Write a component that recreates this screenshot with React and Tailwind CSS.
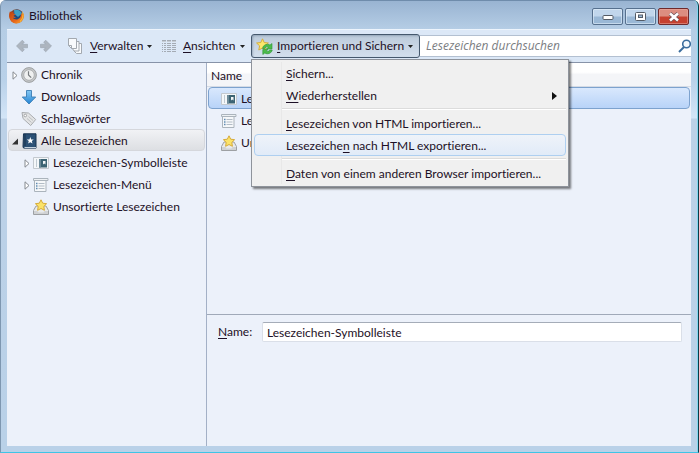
import React from "react";

function Firefox() {
  return (
    <svg width="15" height="15" viewBox="0 0 15 15" aria-hidden="true">
      <defs>
        <linearGradient id="fox" x1="0" y1="0" x2="1" y2="1">
          <stop offset="0" stopColor="#b9400f" />
          <stop offset="0.6" stopColor="#e8681a" />
          <stop offset="1" stopColor="#f9b233" />
        </linearGradient>
      </defs>
      <circle cx="7.500" cy="7.200" r="7" fill="#a3481c" />
      <circle cx="8" cy="6" r="5.600" fill="#1f4a80" />
      <path d="M5 1.200C8 0 12 1.500 13 4.500L9 8 5.500 5z" fill="#3f9fc4" />
      <path d="M1 2.200C.2 4-.1 6 .2 8c.6 3.800 3.700 6.500 7.400 6.500 4 0 7.200-3.200 7.200-7.200 0-2-.7-3.700-1.700-4.800.4 1.500.5 2.500.3 3.500-.8-1-.9-1.700-1.600-2.300.9 3.700-1.300 6.900-4.500 6.900-1.700 0-3-.8-3.600-2 1.200.5 2.300.3 3.200-.4-.9-.1-2-.5-2.400-1.500l2-1.200c.1-.5-1.600-1-2-1.100 0-.7.300-1.300.8-1.800-1-.1-1.900.3-2.500.9C2.100 3.200 1.300 2.900 1 2.200z" fill="url(#fox)" />
      <path d="M13.500 3.500c1 3 .5 6.500-2.500 9" fill="none" stroke="#fbc93e" strokeWidth="1" />
    </svg>
  );
}

function Arrow({ flip }) {
  return (
    <svg width="12" height="14" viewBox="0 0 12 14" className={flip ? "rotate-180" : ""} aria-hidden="true">
      <path d="M.5 7 6.300 1.200l2 2L6.500 5.300h5v3.500h-5l1.800 2-2 2z" fill="#adb5bf" stroke="#98a2ae" strokeWidth=".6" />
    </svg>
  );
}

function Pages() {
  return (
    <svg width="15" height="16" viewBox="0 0 15 16" fill="#f8fafc" stroke="#a3a9b0" aria-hidden="true">
      <path d="M5.500 5.500h8v10h-5l-3-3z" />
      <path d="M3.500 3.500h7.500v9.500H6.500l-3-3z" />
      <path d="M.5.500h8v10h-5l-3-3z" />
      <path d="M.5 7.500h3v3" fill="none" />
    </svg>
  );
}

function Views() {
  return (
    <svg width="14" height="13" viewBox="0 0 14 13" aria-hidden="true">
      <path d="M0 1.500h4M5 1.500h4M10 1.500h4" stroke="#c6ccd3" />
      <path d="M0 .5h4M5 .5h4M10 .5h4M0 3.500h1M2 3.500h2M5 3.500h4M10 3.500h4M0 5.500h1M2 5.500h2M5 5.500h4M10 5.500h4M0 7.500h1M2 7.500h2M5 7.500h4M10 7.500h4M0 9.500h1M2 9.500h2M5 9.500h4M10 9.500h4M0 11.500h1M2 11.500h2M5 11.500h4M10 11.500h4" stroke="#a4abb4" />
    </svg>
  );
}

function ImportStar() {
  return (
    <svg width="17" height="17" viewBox="0 0 17 17" aria-hidden="true">
      <path d="M6.500.8 8.200 4.500l4.200.5-3.100 2.800.8 4.200-3.600-2-3.700 2 .8-4.200L.6 5l4.200-.5z" fill="#fbe66b" stroke="#d8ae3c" strokeLinejoin="round" />
      <path d="M6.500 10.500A4.900 4.900 0 0 1 14 7L16 5.500V11H10.500l1.800-1.800C10.900 8.400 9.300 9 8.800 10.500z" fill="#4cbc4b" stroke="#2b9437" strokeWidth=".6" />
      <path d="M16.300 12A4.900 4.900 0 0 1 8.800 15L6.800 16.500V11.500H12l-1.700 1.700c1.400.7 2.900 0 3.500-1.200z" fill="#4cbc4b" stroke="#2b9437" strokeWidth=".6" />
    </svg>
  );
}

function Clock() {
  return (
    <svg width="16" height="16" viewBox="0 0 16 16" aria-hidden="true">
      <circle cx="8" cy="8" r="7.400" fill="#c6c8c9" stroke="#8f9293" strokeWidth=".8" />
      <circle cx="8" cy="8" r="5.300" fill="#eff0f0" stroke="#a2a5a7" strokeWidth=".8" />
      <path d="M7.500 4.200V8l2.700 2.600" fill="none" stroke="#777b7e" strokeWidth="1.200" />
    </svg>
  );
}

function Down() {
  return (
    <svg width="16" height="16" viewBox="0 0 16 16" aria-hidden="true">
      <defs>
        <linearGradient id="down" x1="0" y1="0" x2="0" y2="1">
          <stop offset="0" stopColor="#86c9f4" />
          <stop offset="1" stopColor="#2484d3" />
        </linearGradient>
      </defs>
      <path d="M5.500 1.500h5V8h4.200L8 15 1.300 8h4.200z" fill="url(#down)" stroke="#3a7db4" strokeWidth=".9" strokeLinejoin="round" />
    </svg>
  );
}

function Tag() {
  return (
    <svg width="16" height="16" viewBox="0 0 16 16" aria-hidden="true">
      <path d="M1 1.500 7.500 2l7.200 6.500-5 6L2 7.500z" fill="#e3e4e5" stroke="#a9acaf" strokeLinejoin="round" />
      <circle cx="4.300" cy="4.500" r="1.300" fill="#fff" stroke="#909396" strokeWidth=".8" />
      <path d="m7.500 5.500 4.500 4M6 7.500l4.500 4" stroke="#bcbfc1" />
    </svg>
  );
}

function Book() {
  return (
    <svg width="15" height="16" viewBox="0 0 15 16" aria-hidden="true">
      <path d="M1.500.800h12.500v14.400H2.500a1.500 1.500 0 0 1-1.500-1.500z" fill="#2c5175" stroke="#193451" />
      <path d="M2.500 14h11.500v1.300H2.500z" fill="#c5d3df" />
      <path d="M3 1v12" stroke="#17334d" />
      <path d="m8.300 4 .9 2.400 2.600.1-2 1.600.7 2.500-2.200-1.400-2.200 1.400.7-2.500-2-1.600 2.600-.1z" fill="#fff" />
    </svg>
  );
}

function ToolbarFolder() {
  return (
    <svg width="16" height="12" viewBox="0 0 16 12" aria-hidden="true">
      <path d="M.5.500h15v11H.5z" fill="#f4f7f9" stroke="#c3c9cf" />
      <path d="M3.500 2.500v7" stroke="#8c9caa" strokeDasharray="1 1" />
      <path d="M6 2h8v8.500H6z" fill="#3c6474" />
      <path d="M6 2h2v8.500H6z" fill="#6d8b99" />
      <path d="M10 4h2.500v3.500L11.200 6.500 10 7.500z" fill="#f2f6f8" />
    </svg>
  );
}

function MenuFolder() {
  return (
    <svg width="16" height="14" viewBox="0 0 16 14" aria-hidden="true">
      <path d="M1.500 2.500h11.500v11H1.500z" fill="#f6f8fa" stroke="#abb4bc" />
      <path d="M.5.500h14.500v2H.5z" fill="#edf1f4" stroke="#abb4bc" />
      <path d="M5.500 5.500h6M5.500 8h6M5.500 10.500h6" stroke="#b2bcc6" />
      <path d="M3 5.500h1.500M3 8h1.500M3 10.500h1.500" stroke="#5f8ab2" strokeWidth="1.300" />
    </svg>
  );
}

function Unsorted() {
  return (
    <svg width="16" height="16" viewBox="0 0 16 16" aria-hidden="true">
      <path d="M3 7h10l2.500 4.500v4H.5v-4z" fill="#e8eaeb" stroke="#9da0a3" strokeLinejoin="round" />
      <path d="M1 12h3.500l1 1.500h5l1-1.500H15v3H1z" fill="#d0d2d4" />
      <path d="m8 .800 1.700 3.400 3.900.5-2.800 2.700.6 3.900L8 9.500l-3.400 1.800.6-3.900-2.800-2.700 3.900-.5z" fill="#fbe369" stroke="#d6aa38" strokeLinejoin="round" />
    </svg>
  );
}

function Twisty({ open }) {
  return (
    <svg width="6" height="9" viewBox="0 0 6 9" aria-hidden="true">
      {open ? (
        <path d="M6 1.500v6H0z" fill="#333" />
      ) : (
        <path d="M1 .8v7.400l4-3.700z" fill="#fff" stroke="#858a90" />
      )}
    </svg>
  );
}

function Caret() {
  return (
    <svg width="5" height="3" viewBox="0 0 5 3" aria-hidden="true">
      <path d="M0 0h5L2.500 3z" fill="#222" />
    </svg>
  );
}

function Magnifier() {
  return (
    <svg width="13" height="14" viewBox="0 0 13 14" fill="none" aria-hidden="true">
      <path d="M6 8 1 13" stroke="#3b6d9d" strokeWidth="2" />
      <circle cx="8.500" cy="5" r="3.800" fill="#f4f9fd" stroke="#3b6d9d" strokeWidth="1.600" />
    </svg>
  );
}

function Key({ children }) {
  return <span className="underline underline-offset-2">{children}</span>;
}

function WindowButton({ label, close, children }) {
  return (
    <button
      type="button"
      aria-label={label}
      className={
        close
          ? "flex h-[17px] w-[31px] items-center justify-center rounded-xs border border-[#6f2a2c] bg-linear-to-b from-[#dc8d80] from-45% to-[#c6402f] to-55% shadow-[inset_0_0_0_1px_#e9b0a680]"
          : "flex h-[17px] w-[31px] items-center justify-center rounded-xs border border-[#56708e] bg-linear-to-b from-[#c1d6ec] from-45% to-[#9ab8d6] to-55% shadow-[inset_0_0_0_1px_#e3eefa99]"
      }
    >
      {children}
    </button>
  );
}

function SideRow({ icon, label, twisty, open, nested, selected }) {
  return (
    <li>
      <button
        type="button"
        className={
          (nested ? "pl-[15px] " : "pl-[3px] ") +
          (selected
            ? "border-[#d5d7dc] bg-linear-to-b from-[#f1f2f5] to-[#dddfe3] "
            : "border-transparent ") +
          "flex h-[22px] w-full items-center rounded-sm border pt-[2px] pr-1 text-left"
        }
      >
        <span className="flex w-[9px] shrink-0">{twisty && <Twisty open={open} />}</span>
        <span className="flex w-4 shrink-0 justify-center">{icon}</span>
        <span className="ml-1 whitespace-nowrap">{label}</span>
      </button>
    </li>
  );
}

function MenuItem({ children, highlighted, submenu }) {
  return (
    <button
      type="button"
      role="menuitem"
      className={
        (highlighted
          ? "border-[#aecff0] bg-linear-to-b from-[#eff3f9] to-[#e1ebf8] "
          : "border-transparent ") +
        "flex h-[22px] w-full items-center justify-between rounded-sm border pt-[2px] pr-2 pl-[31px] text-left whitespace-nowrap"
      }
    >
      <span>{children}</span>
      {submenu && (
        <svg width="5" height="8" viewBox="0 0 5 8" aria-hidden="true">
          <path d="M0 0v8l5-4z" fill="#111" />
        </svg>
      )}
    </button>
  );
}

function Separator() {
  return (
    <div role="separator" className="flex h-[6px] items-center pl-7">
      <div className="h-[2px] w-full border-t border-[#dcdcdc] bg-white" />
    </div>
  );
}

function ImportMenu() {
  return (
    <div
      role="menu"
      className="absolute top-[25px] left-0 z-10 w-[318px] border border-[#8e939b] bg-[#f0f0f0] p-[2px] shadow-[2px_2px_2px_#00000080]"
    >
      <div className="bg-linear-to-r from-transparent from-[27px] via-[#e0e0e0] via-[27px] to-transparent to-[28px]">
        <MenuItem><Key>S</Key>ichern...</MenuItem>
        <MenuItem submenu><Key>W</Key>iederherstellen</MenuItem>
        <Separator />
        <MenuItem><Key>L</Key>esezeichen von HTML importieren...</MenuItem>
        <MenuItem highlighted>Lesezeiche<Key>n</Key> nach HTML exportieren...</MenuItem>
        <Separator />
        <MenuItem><Key>D</Key>aten von einem anderen Browser importieren...</MenuItem>
      </div>
    </div>
  );
}

function ListRow({ icon, label, selected }) {
  return (
    <tr>
      <td className="p-0">
        <div
          className={
            (selected
              ? "border-[#7da2ce] bg-linear-to-b from-[#d9e8fd] to-[#b8d3f8] "
              : "border-transparent ") +
            "mx-[1px] flex h-[22px] items-center rounded-sm border pt-[1px] pl-3"
          }
        >
          <span className="flex w-4 shrink-0 justify-center">{icon}</span>
          <span className="ml-1 whitespace-nowrap">{label}</span>
        </div>
      </td>
    </tr>
  );
}

export default function App() {
  return (
    <div className="flex min-h-screen flex-col overflow-hidden rounded-t-md border-x border-b border-l-[#7e97b0] border-r-[#0c3947] border-b-[#3fc4e6] bg-[linear-gradient(to_bottom,#98b3d1_0px,#b5cde5_29px,#b9d1e9_80px,#d3e5f7_118px,#bcd1e7_119px,#b9d1e8_100%)] font-[Lato,'Open_Sans',sans-serif] text-[12px] leading-4 text-[#1d1026] shadow-[inset_-1px_0_0_#7fd6ee] [font-variant-ligatures:none]">
      <header className="flex h-[29px] items-start justify-between border-t border-[#6f8cab] pr-[9px] pl-2">
        <div className="flex items-center gap-1 pt-[7px]">
          <Firefox />
          <h1 className="pl-[1px]">Bibliothek</h1>
        </div>
        <div className="flex gap-[2px] pt-[7px]">
          <WindowButton label="Minimieren">
            <svg width="12" height="6" viewBox="0 0 12 6"><rect x="1" y="1.500" width="10" height="4" rx="1" fill="#fff" stroke="#535b66" /></svg>
          </WindowButton>
          <WindowButton label="Maximieren">
            <svg width="11" height="9" viewBox="0 0 11 9"><rect x=".5" y=".5" width="10" height="8" rx="1" fill="#fff" stroke="#535b66" /><rect x="3.500" y="3" width="4" height="2.500" fill="#9ab8d6" stroke="#535b66" /></svg>
          </WindowButton>
          <WindowButton label="Schließen" close>
            <svg width="12" height="10" viewBox="0 0 12 10"><path d="M2 1.500 10 8.500M10 1.500 2 8.500" stroke="#6b5357" strokeWidth="4" /><path d="M2 1.500 10 8.500M10 1.500 2 8.500" stroke="#fff" strokeWidth="2.600" /></svg>
          </WindowButton>
        </div>
      </header>

      <div className="mr-[7px] mb-[6px] ml-[6px] flex flex-1 flex-col bg-[#ecf1fa]">
        <div className="flex h-[34px] items-center border-y border-t-[#edf4fc] border-b-[#8793a8] bg-[#dce8f7]">
          <div className="flex w-[61px] shrink-0 gap-3 pl-[9px]">
            <button type="button" aria-label="Zurück"><Arrow /></button>
            <button type="button" aria-label="Vor"><Arrow flip /></button>
          </div>
          <button type="button" className="flex w-[94px] shrink-0 items-center whitespace-nowrap">
            <Pages />
            <span className="ml-[7px]"><Key>V</Key>erwalten</span>
            <span className="ml-1"><Caret /></span>
          </button>
          <button type="button" className="flex w-[89px] shrink-0 items-center whitespace-nowrap">
            <Views />
            <span className="ml-[7px]"><Key>A</Key>nsichten</span>
            <span className="ml-1"><Caret /></span>
          </button>
          <div className="relative shrink-0">
            <button
              type="button"
              aria-haspopup="menu"
              aria-expanded="true"
              className="flex h-6 w-[169px] items-center rounded-[3px] border border-[#45586d] bg-linear-to-b from-[#bccbdb] to-[#d3dfed] pl-1 whitespace-nowrap shadow-[inset_1px_1px_2px_#5b6f8666]"
            >
              <ImportStar />
              <span className="ml-1"><Key>I</Key>mportieren und Sichern</span>
              <span className="ml-1"><Caret /></span>
            </button>
            <ImportMenu />
          </div>
          <div className="flex h-[22px] min-w-0 flex-1 items-center border-y border-[#b3c0d1] bg-white pl-[6px]">
            <input
              type="search"
              aria-label="Lesezeichen durchsuchen"
              placeholder="Lesezeichen durchsuchen"
              className="min-w-0 flex-1 font-['Open_Sans',sans-serif] italic outline-none placeholder:text-[#7b7d82]"
            />
            <Magnifier />
          </div>
        </div>

        <div className="flex flex-1">
          <nav className="w-[200px] shrink-0 border-r border-[#a3b0c6] px-[1px]">
            <ul>
              <SideRow twisty icon={<Clock />} label="Chronik" />
              <SideRow icon={<Down />} label="Downloads" />
              <SideRow icon={<Tag />} label="Schlagwörter" />
              <SideRow twisty open selected icon={<Book />} label="Alle Lesezeichen" />
              <SideRow nested twisty icon={<ToolbarFolder />} label="Lesezeichen-Symbolleiste" />
              <SideRow nested twisty icon={<MenuFolder />} label="Lesezeichen-Menü" />
              <SideRow nested icon={<Unsorted />} label="Unsortierte Lesezeichen" />
            </ul>
          </nav>

          <main className="flex min-w-0 flex-1 flex-col">
            <div className="flex-1">
              <table className="w-full border-separate border-spacing-0">
                <thead>
                  <tr>
                    <th className="h-6 border-b border-[#d5dbe5] bg-linear-to-b from-white from-40% to-[#f4f5f8] to-50% p-0 pt-[2px] pl-1 text-left font-normal">
                      Name
                    </th>
                  </tr>
                </thead>
                <tbody>
                  <ListRow selected icon={<ToolbarFolder />} label="Lesezeichen-Symbolleiste" />
                  <ListRow icon={<MenuFolder />} label="Lesezeichen-Menü" />
                  <ListRow icon={<Unsorted />} label="Unsortierte Lesezeichen" />
                </tbody>
              </table>
            </div>
            <form className="flex h-[132px] items-start border-t border-[#a0a9b8] pt-[7px] pr-[9px] pl-[11px]">
              <label htmlFor="name" className="w-11 shrink-0 pt-[2px]"><Key>N</Key>ame:</label>
              <input
                id="name"
                type="text"
                defaultValue="Lesezeichen-Symbolleiste"
                className="h-5 min-w-0 flex-1 rounded-xs border border-[#dadfe8] border-t-[#a5acb8] bg-white px-1 outline-none"
              />
            </form>
          </main>
        </div>
      </div>
    </div>
  );
}
